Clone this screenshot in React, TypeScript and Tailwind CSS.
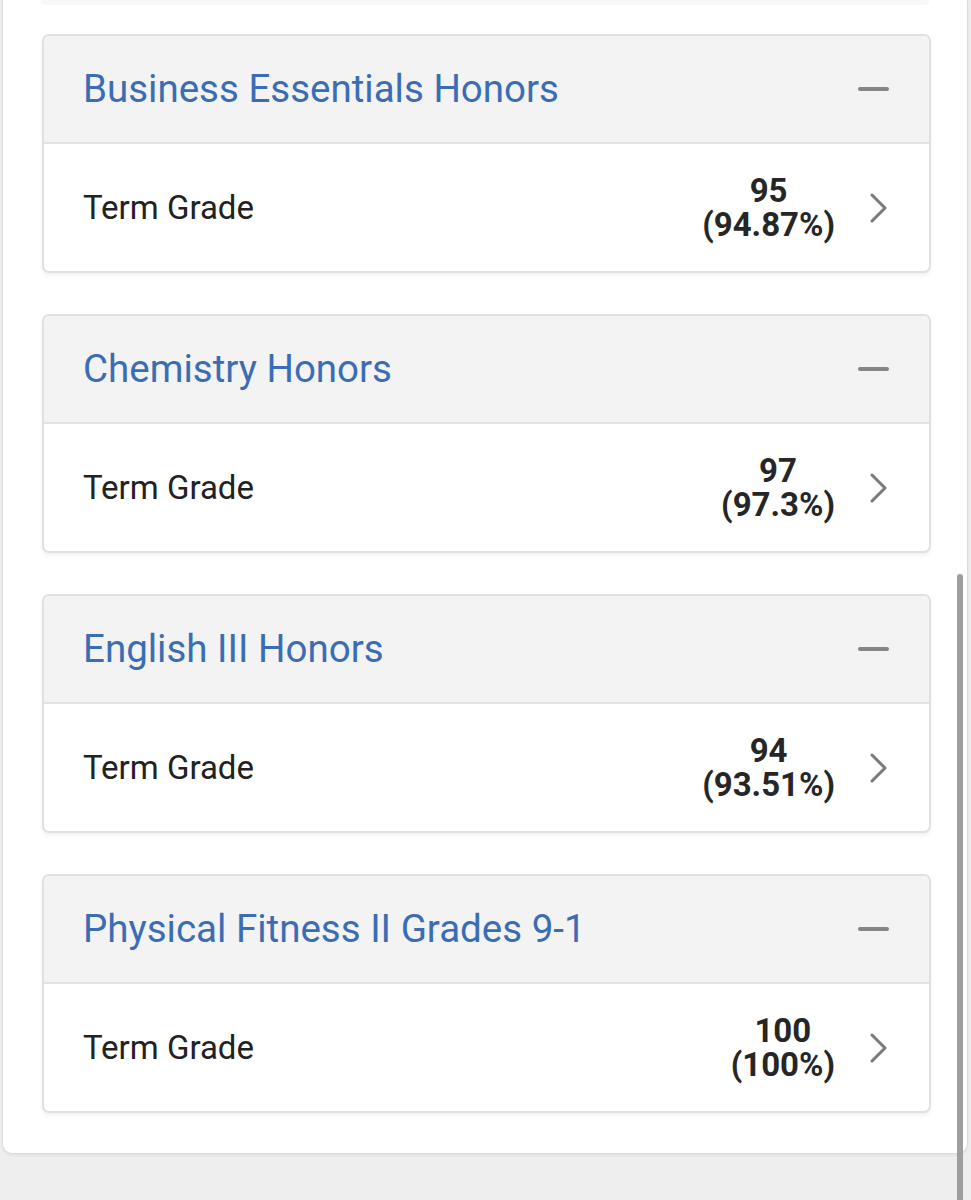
interface Course {
  name: string
  grade: string
  percent: string
}

const courses: Course[] = [
  { name: "Business Essentials Honors", grade: "95", percent: "(94.87%)" },
  { name: "Chemistry Honors", grade: "97", percent: "(97.3%)" },
  { name: "English III Honors", grade: "94", percent: "(93.51%)" },
  { name: "Physical Fitness II Grades 9-1", grade: "100", percent: "(100%)" },
]

function Chevron() {
  return (
    <svg width="20" height="30" viewBox="0 0 20 30" fill="none" className="ml-[34px] text-[#7a7a7a]">
      <polyline points="3,2 16,15 3,28" stroke="currentColor" strokeWidth="3" strokeLinecap="round" strokeLinejoin="round" />
    </svg>
  )
}

function CourseCard({ course }: { course: Course }) {
  return (
    <div className="rounded-[7px] border-2 border-[#e0e0e0] bg-white shadow-[0_3px_4px_rgba(0,0,0,0.05)] overflow-hidden">
      {/* Header */}
      <div className="flex items-center justify-between h-[108px] pl-[39px] pr-[40px] bg-[#f3f3f3] border-b-2 border-[#e2e2e2]">
        <span className="text-[38.5px] text-[#3a6db3]">{course.name}</span>
        <span className="block w-[31px] h-[4px] rounded-full bg-[#858585]" />
      </div>
      {/* Term grade row */}
      <div className="flex items-center h-[127px] pl-[39px] pr-[40px]">
        <span className="flex-1 text-[33px] text-[#222]">Term Grade</span>
        <div className="flex flex-col items-center text-[33px] font-bold text-[#262626]">
          <div className="h-[34px] leading-[34px]">{course.grade}</div>
          <div className="h-[34px] leading-[34px]">{course.percent}</div>
        </div>
        <Chevron />
      </div>
    </div>
  )
}

export default function App() {
  return (
    <div className="relative h-[1200px] overflow-hidden bg-[#eeeeee]" style={{ fontFamily: "Roboto, 'Noto Sans', sans-serif" }}>
      <div className="ml-[2px] w-[966px] rounded-b-[10px] border-x border-b border-[#dcdcdc] bg-white pb-[40px] shadow-[0_2px_3px_rgba(0,0,0,0.05)]">
        {/* tail of previous card */}
        <div className="mx-[38px] h-[5px] bg-[#f8f8f8] rounded-b" />
        <div className="flex flex-col gap-[41px] pt-[29px] pl-[39px] pr-[36px]">
          {courses.map((c) => (
            <CourseCard key={c.name} course={c} />
          ))}
        </div>
      </div>
      {/* scrollbar */}
      <div className="absolute left-[957px] top-[574px] w-[6px] h-[700px] rounded-full bg-[#9e9e9e]" />
    </div>
  )
}
